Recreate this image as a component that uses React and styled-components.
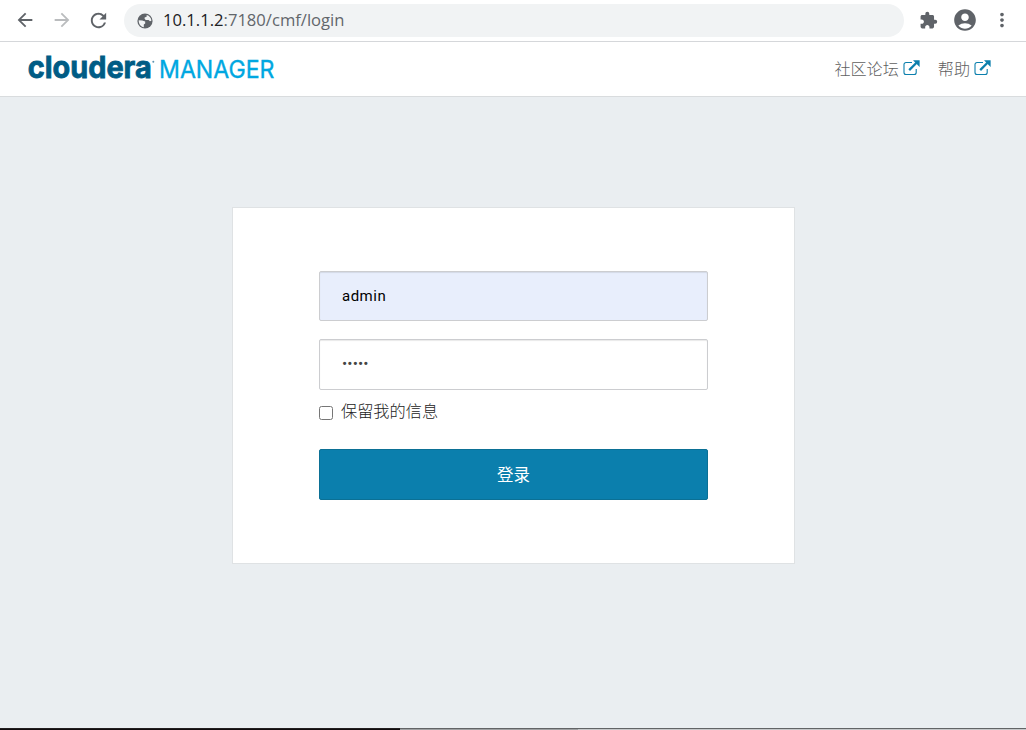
import React from 'react';
import styled, { createGlobalStyle } from 'styled-components';
import { MdArrowBack, MdArrowForward, MdRefresh, MdExtension, MdAccountCircle, MdMoreVert } from 'react-icons/md';

const GlobalStyle = createGlobalStyle`
  * { box-sizing: border-box; }
  body { margin: 0; font-family: "Noto Sans", "Noto Sans CJK SC", sans-serif; font-size: 16px; }
  input, button { font: inherit; }
`;
const Page = styled.div`
  height: 730px;
  display: flex;
  flex-direction: column;
  background: #eaeef1;
  overflow: hidden;
`;
const BrowserBar = styled.div`
  height: 42px;
  flex: none;
  display: flex;
  align-items: flex-start;
  padding: 4px 8px 0 14px;
  background: #fff;
  border-bottom: 1px solid #d5d7da;
`;
const ToolIcon = styled.span`
  display: flex;
  align-items: center;
  justify-content: center;
  width: ${(p) => p.$w || 37}px;
  height: 32px;
  color: ${(p) => (p.$muted ? '#babcbe' : '#5f6368')};
`;
const AddressBar = styled.div`
  flex: 1;
  height: 33px;
  display: flex;
  align-items: center;
  gap: 10px;
  margin: 0 7px 0 5px;
  padding-left: 13px;
  border-radius: 17px;
  background: #f1f3f4;
  color: #5f6368;
`;
const Url = styled.span`
  font: 16.6px/31px "Open Sans", sans-serif;
  margin-bottom: 2px;
  color: #62666b;
  b { font-weight: 400; color: #202124; }
`;
const Header = styled.header`
  height: 55px;
  flex: none;
  display: flex;
  align-items: center;
  justify-content: space-between;
  padding: 0 35px 0 20px;
  background: #fff;
  border-bottom: 1px solid #d9dcde;
`;
const Logo = styled.svg`
  display: block;
  width: 280px;
  height: 54px;
  overflow: visible;
`;
const Nav = styled.nav`
  display: flex;
  gap: 18px;
  margin-bottom: 2px;
`;
const NavLink = styled.a`
  display: flex;
  align-items: center;
  gap: 4px;
  color: #606060;
  font: 300 16.1px/24px "Noto Sans CJK SC", sans-serif;
  svg { display: block; margin-top: -1px; }
`;
const Card = styled.form`
  width: 563px;
  height: 357px;
  margin: 110px 0 0 232px;
  padding: 63px 86px 0;
  display: flex;
  flex-direction: column;
  background: #fff;
  border: 1px solid #dfe2e4;
`;
const Field = styled.input`
  height: ${(p) => p.$h}px;
  flex: none;
  width: 100%;
  margin-bottom: ${(p) => p.$gap}px;
  padding: 0 22px ${(p) => p.$lift}px;
  border: 1px solid #cccdd0;
  border-radius: 2px;
  outline: 0;
  background: ${(p) => p.$bg};
  color: ${(p) => p.$ink};
  font: ${(p) => p.$size}px Roboto, sans-serif;
  letter-spacing: ${(p) => p.$track}px;
  box-shadow: inset 0 1px 1px rgba(0, 0, 0, 0.09);
`;
const Remember = styled.label`
  height: 24px;
  display: flex;
  align-items: center;
  gap: 8px;
  color: #222;
  font: 300 16.2px/24px "Noto Sans CJK SC", sans-serif;
`;
const RememberText = styled.span`
  margin-bottom: 2px;
`;
const Check = styled.input`
  appearance: none;
  width: 14px;
  height: 14px;
  margin: 4px 0 0;
  border: 1px solid #767676;
  border-radius: 2.5px;
  background: #fff;
`;
const Submit = styled.button`
  height: 51px;
  margin-top: 26px;
  padding: 0 0 1px;
  border: 1px solid #0b7095;
  border-radius: 2px;
  background: #0b7fad;
  color: #fff;
  font: 400 16.5px/24px "Noto Sans CJK SC", sans-serif;
`;
const BottomEdge = styled.div`
  height: 2px;
  margin-top: auto;
  display: grid;
  grid-template-columns: 400px 178px 1fr;
`;
const EdgePart = styled.span`
  background: ${(p) => p.$b};
  border-top: 1px solid ${(p) => p.$t};
`;

const Globe = () => (
  <svg width="16" height="16" viewBox="0 0 16 16">
    <circle cx="8" cy="8" r="7.6" fill="#5f6368" />
    <path d="M9.7 1.9C12.5 2.6 14.3 5 14.4 7.7L13 8.3 11.6 7H8.7L7.6 5.7V4.6L9.6 3.7Z" fill="#f1f3f4" />
    <path d="M1.7 7.2 5.2 7.4 8.2 8.6V10.4L6.8 11.4V14.2C3.8 13.6 1.5 10.9 1.7 7.2Z" fill="#f1f3f4" />
  </svg>
);

const External = () => (
  <svg width="17" height="16" viewBox="0 0 17 16" fill="none" stroke="#0b7fad">
    <path d="M9 2.5H3a2 2 0 0 0-2 2v8a2 2 0 0 0 2 2h8.2a2 2 0 0 0 2-2V9" strokeWidth="1.1" />
    <path d="M6.2 10.1 13.5 2.8" strokeWidth="2.3" />
    <path d="M10 .3H16.6V6.9Z" fill="#0b7fad" stroke="none" />
  </svg>
);

export default function App() {
  return (
    <>
      <GlobalStyle />
      <Page>
        <BrowserBar>
          <ToolIcon $w={22}><MdArrowBack size={22} /></ToolIcon>
          <ToolIcon $w={51} $muted><MdArrowForward size={22} /></ToolIcon>
          <ToolIcon $w={23}><MdRefresh size={23} /></ToolIcon>
          <ToolIcon $w={9} />
          <AddressBar>
            <Globe />
            <Url><b>10.1.1.2</b>:7180/cmf/login</Url>
          </AddressBar>
          <ToolIcon $w={34}><MdExtension size={19} /></ToolIcon>
          <ToolIcon $w={40}><MdAccountCircle size={26} /></ToolIcon>
          <ToolIcon $w={33}><MdMoreVert size={22} /></ToolIcon>
        </BrowserBar>
        <Header>
          <Logo viewBox="-8 0 280 54">
            <text x="-0.3" y="35.6" fontFamily="Inter" fontWeight="700" fontSize="30.5" fill="#005c85" stroke="#005c85" strokeWidth="0.8" textLength="124" lengthAdjust="spacingAndGlyphs">cloudera</text>
            <circle cx="125.3" cy="19.7" r="1" fill="#5f94b0" />
            <text x="131" y="36" fontFamily="Inter" fontWeight="400" fontSize="24.5" fill="#00a7e1" stroke="#00a7e1" strokeWidth="0.35" textLength="115.5" lengthAdjust="spacingAndGlyphs">MANAGER</text>
          </Logo>
          <Nav>
            <NavLink>社区论坛<External /></NavLink>
            <NavLink>帮助<External /></NavLink>
          </Nav>
        </Header>
        <Card>
          <Field $h={50} $gap={18} $bg="#e8eefc" $ink="#000" $size={15} $track={0.5} $lift={0} defaultValue="admin" />
          <Field $h={51} $gap={9} $bg="#fff" $ink="#444" $size={15.5} $track={0.1} $lift={2} type="password" defaultValue="admin" />
          <Remember><Check type="checkbox" /><RememberText>保留我的信息</RememberText></Remember>
          <Submit type="button">登录</Submit>
        </Card>
        <BottomEdge>
          <EdgePart $t="#221f20" $b="#110d0e" />
          <EdgePart $t="#626466" $b="#9fa1a3" />
          <EdgePart $t="#626466" $b="#c5c7c9" />
        </BottomEdge>
      </Page>
    </>
  );
}
